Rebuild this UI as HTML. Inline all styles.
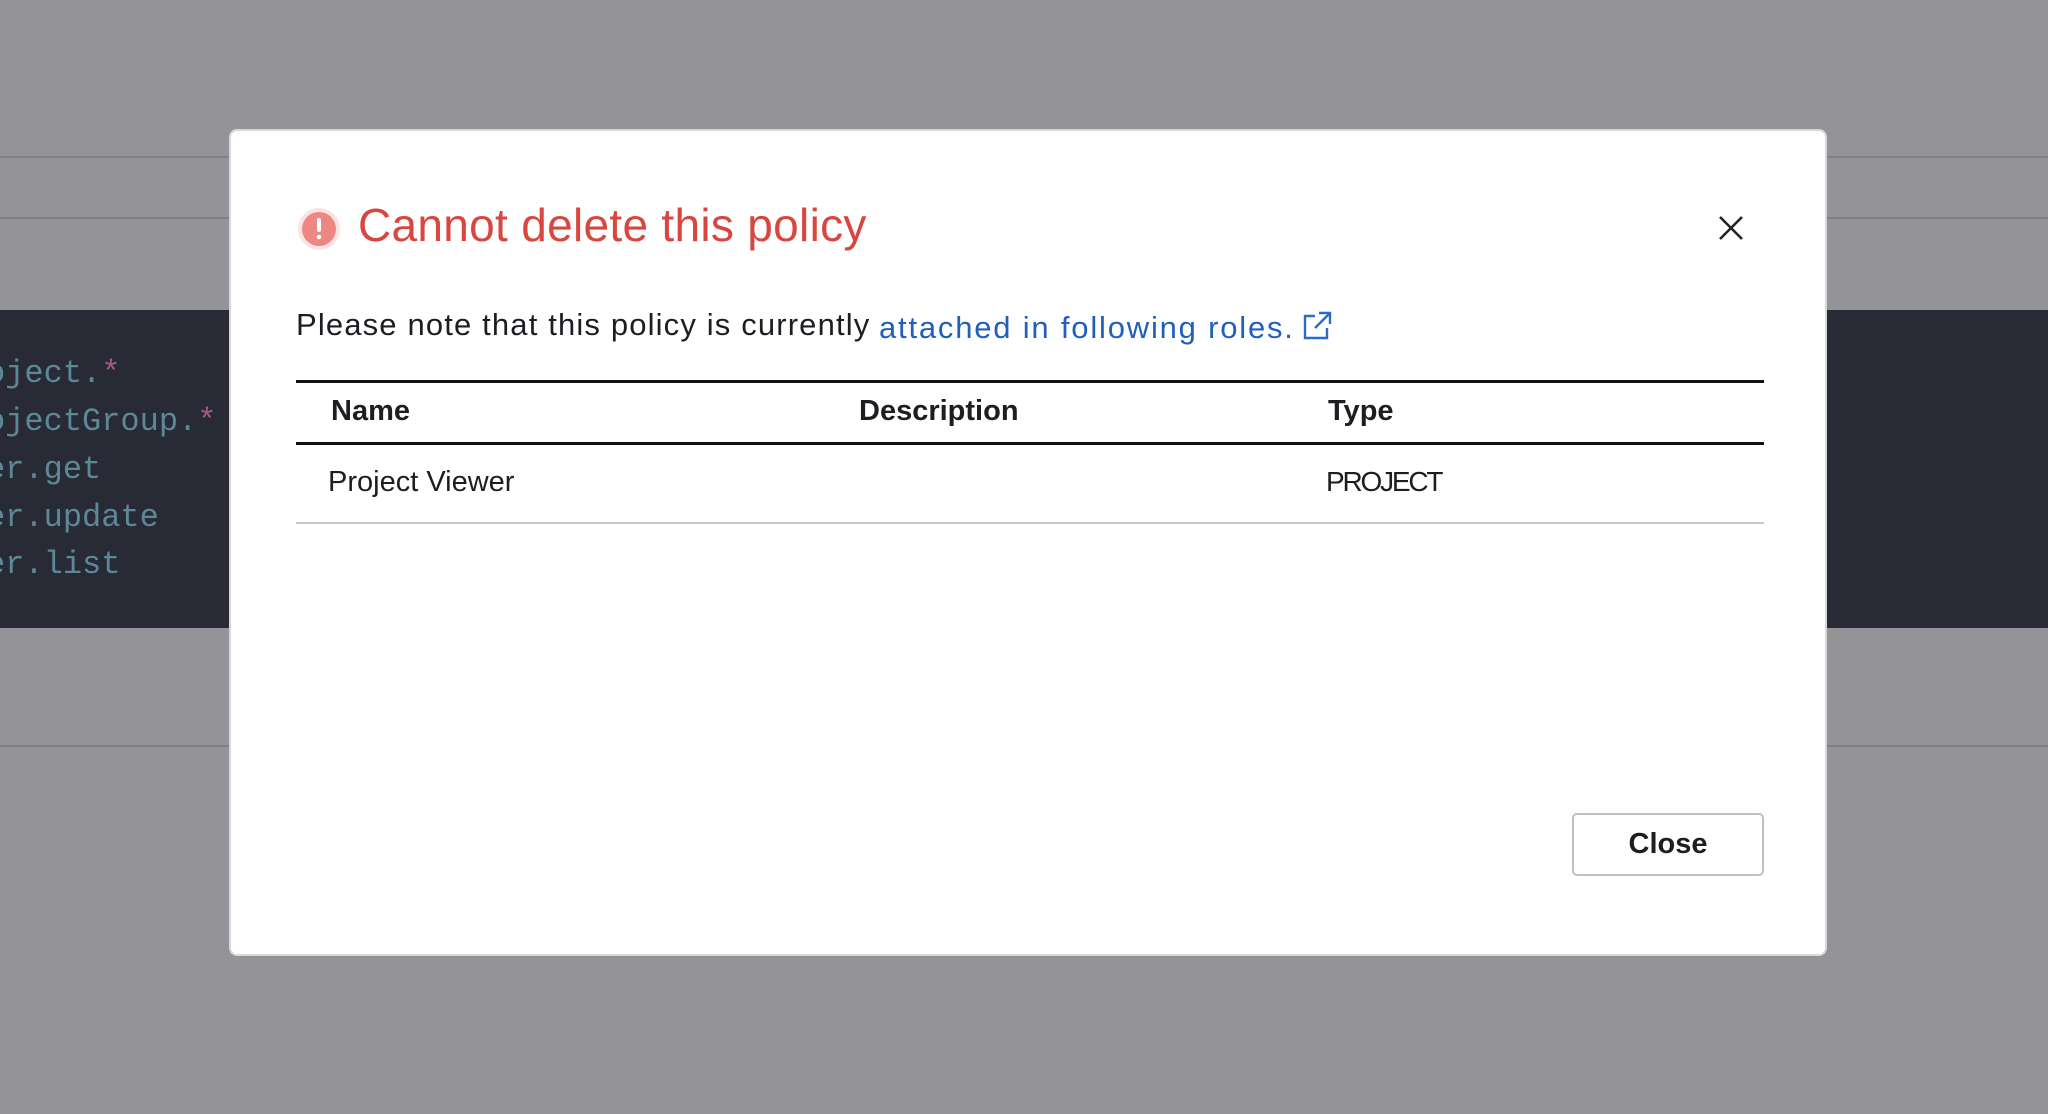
<!DOCTYPE html>
<html><head><meta charset="utf-8"><style>
*{margin:0;padding:0;box-sizing:border-box}
body{width:2048px;height:1114px;background:#939398;position:relative;overflow:hidden;font-family:"Liberation Sans",sans-serif}
.abs{position:absolute}
.line{position:absolute;left:0;width:2048px;height:2px;background:#7f8085}
.dark{position:absolute;left:0;top:310px;width:2048px;height:318px;background:#282a36}
.code{position:absolute;left:-14px;font-family:"Liberation Mono",monospace;font-size:32px;color:#5d8898;line-height:31px}
.code b{color:#a35a85;font-weight:normal}
.modal{position:absolute;left:229px;top:129px;width:1598px;height:827px;background:#fff;border-radius:8px;border:2px solid #d8d8dc}
.t{position:absolute;white-space:nowrap}
</style></head><body>
<div class="line" style="top:156px"></div>
<div class="line" style="top:217px"></div>
<div class="dark"></div>
<div class="line" style="top:745px"></div>
<div class="code" style="top:358px">oject.<b>*</b></div>
<div class="code" style="top:406px">ojectGroup.<b>*</b></div>
<div class="code" style="top:454px">er.get</div>
<div class="code" style="top:502px">er.update</div>
<div class="code" style="top:549px">er.list</div>

<div class="modal">
 <svg class="abs" style="left:66px;top:76px" width="44" height="44" viewBox="0 0 44 44">
  <circle cx="22" cy="22" r="21" fill="#fbe3e3"/>
  <circle cx="22" cy="22" r="17" fill="#ee8683"/>
  <rect x="20" y="11" width="4" height="14" rx="2" fill="#fff"/>
  <circle cx="22" cy="30" r="2.3" fill="#fff"/>
 </svg>
 <div class="t" style="left:127px;top:67px;font-size:46px;color:#d9463f;letter-spacing:0.3px">Cannot delete this policy</div>
 <svg class="abs" style="left:1487px;top:84px" width="26" height="26" viewBox="0 0 26 26"><path d="M2 2L24 24M24 2L2 24" stroke="#222" stroke-width="2.6"/></svg>
 <div class="t" style="left:65px;top:176px;font-size:31px;color:#1d1d22;letter-spacing:1.15px">Please note that this policy is currently</div>
 <div class="t" style="left:648px;top:179px;font-size:31px;color:#2060bd;letter-spacing:1.8px">attached in following roles.</div>
 <svg class="abs" style="left:1070px;top:179px" width="32" height="32" viewBox="0 0 32 32" fill="none" stroke="#2a6cc8" stroke-width="2.4"><path d="M14 6H4V28H26V18"/><path d="M18 3H29V14M29 3L14 18"/></svg>
 <div class="abs" style="left:65px;top:249px;width:1468px;height:3px;background:#111"></div>
 <div class="t" style="left:100px;top:264px;font-size:29px;font-weight:bold;color:#1d1d22">Name</div>
 <div class="t" style="left:628px;top:264px;font-size:29px;font-weight:bold;color:#1d1d22">Description</div>
 <div class="t" style="left:1097px;top:264px;font-size:29px;font-weight:bold;color:#1d1d22">Type</div>
 <div class="abs" style="left:65px;top:311px;width:1468px;height:3px;background:#111"></div>
 <div class="t" style="left:97px;top:335px;font-size:29px;color:#1d1d22">Project Viewer</div>
 <div class="t" style="left:1095px;top:335px;font-size:28px;color:#1d1d22;letter-spacing:-2.2px">PROJECT</div>
 <div class="abs" style="left:65px;top:391px;width:1468px;height:2px;background:#c9c9cd"></div>
 <div class="abs" style="left:1341px;top:682px;width:192px;height:63px;border:2px solid #c0c0c4;border-radius:5px;font-size:29px;font-weight:bold;color:#1d1d22;text-align:center;line-height:59px">Close</div>
</div>
</body></html>
